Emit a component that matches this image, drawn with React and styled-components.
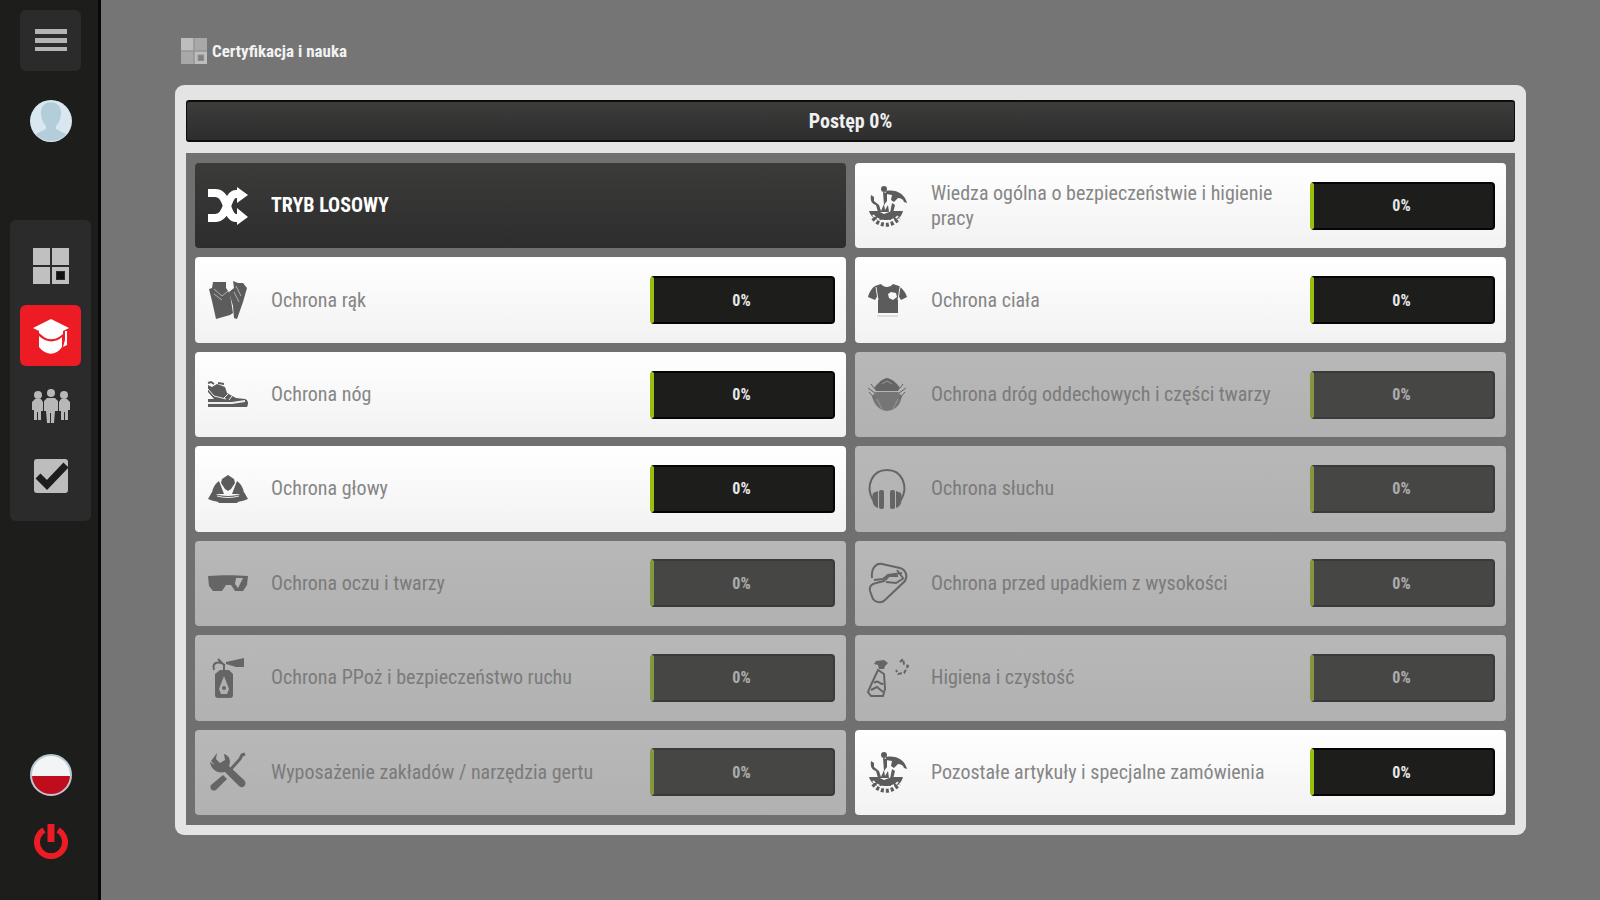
import styled, { createGlobalStyle } from 'styled-components';

const GlobalStyle = createGlobalStyle`
    * {
        box-sizing: border-box;
    }
    body {
        margin: 0;
        background: #757575;
        font-family: 'Roboto Condensed', 'Liberation Sans Narrow', Roboto, sans-serif;
    }
    button {
        font-family: inherit;
        border: 0;
        padding: 0;
        cursor: pointer;
    }
`

const Page = styled.div`
    display: flex;
    min-height: 100vh;
`
const Sidebar = styled.nav`
    display: flex;
    flex-direction: column;
    align-items: center;
    width: 101px;
    padding: 10px 0 41px;
    background: #1d1d1b;
    box-shadow: inset -3px 0 #080808;
`
const SideButton = styled.button`
    display: flex;
    align-items: center;
    justify-content: center;
    width: 61px;
    height: 61px;
    border-radius: 6px;
    background: ${props => props.$bg || 'transparent'};
`
const RoundButton = styled.button`
    display: block;
    width: 44px;
    height: 44px;
    border-radius: 50%;
    background: transparent;
    margin-top: ${props => props.$top || 0};
`
const Menu = styled.div`
    display: flex;
    flex-direction: column;
    gap: 9px;
    margin-top: 77px;
    padding: 15px 10px;
    border-radius: 6px;
    background: #2b2b2b;
`
const SideBottom = styled.div`
    display: flex;
    flex-direction: column;
    align-items: center;
    gap: 26px;
    margin-top: auto;
`
const PowerButton = styled.button`
    display: flex;
    background: transparent;
`
const Main = styled.main`
    display: flex;
    flex-direction: column;
    flex: 1;
    padding: 0 74px 65px;
`
const Header = styled.header`
    display: flex;
    align-items: center;
    gap: 5px;
    height: 85px;
    padding: 17px 6px 0;
`
const Title = styled.h1`
    margin: 0;
    color: #f2f2f2;
    font-size: 17px;
    font-weight: 700;
    line-height: 25px;
`
const Panel = styled.section`
    display: flex;
    flex-direction: column;
    flex: 1;
    gap: 11px;
    padding: 15px 11px 10px;
    border-radius: 9px;
    background: #e4e4e4;
`
const TotalBar = styled.div`
    display: flex;
    align-items: center;
    justify-content: center;
    height: 42px;
    border: 1px solid #0c0c0c;
    border-width: 2px 1px;
    border-radius: 3px;
    background: linear-gradient(#3c3c3b, #2d2d2d);
    color: #f0f0f0;
    font-size: 20px;
    font-weight: 700;
`
const Grid = styled.div`
    display: grid;
    grid-template-columns: 1fr 1fr;
    grid-auto-rows: 1fr;
    flex: 1;
    gap: 9px;
    padding: 10px 9px;
    background: #707070;
`
const Card = styled.button`
    display: flex;
    align-items: center;
    gap: 23px;
    min-height: 68px;
    padding: 0 11px 0 13px;
    border-radius: 4px;
    background: ${props => props.$dark ? 'linear-gradient(#3b3b3a, #2d2d2d)' : 'linear-gradient(#ffffff, #f2f2f2)'};
    color: ${props => props.$dark ? '#ffffff' : '#868686'};
    text-align: left;
    &:disabled {
        opacity: 0.5;
        cursor: default;
    }
`
const CardIcon = styled.svg`
    flex: none;
    width: 40px;
    height: 40px;
    color: ${props => props.$light ? '#ffffff' : '#5c5c5c'};
    fill: currentColor;
    overflow: visible;
`
const Label = styled.span`
    flex: 1;
    font-size: 20px;
    font-weight: ${props => props.$strong ? 700 : 400};
    line-height: 25px;
`
const Badge = styled.span`
    display: flex;
    align-items: center;
    justify-content: center;
    flex: none;
    width: 185px;
    height: 48px;
    padding-right: 4px;
    border: 2px solid #050505;
    border-left: 4px solid #97bf0d;
    border-radius: 4px;
    background: #1d1d1b;
    color: #e8e8e8;
    font-size: 16px;
    font-weight: 700;
`

const Shuffle = () => (
    <>
        <path d="M0 7h7c6 0 9 4 12 13s5 12 9 12h4M0 32h7c6 0 9-4 12-12s5-12 9-12h4" fill="none" stroke="currentColor" strokeWidth="8" />
        <path d="M29 1l11 8-11 8zM29 22l11 9-11 8z" />
    </>
)

const Harbour = () => (
    <>
        <circle cx="16" cy="3" r="3" />
        <path d="M15 6l4 1 0 8-3 4z" />
        <path d="M3 9l3 2 0 4 5 4 2 6 3-7 1 6 3-5 1 7h-11l-2-7C4 18 2 15 3 9z" />
        <path d="M18 5c10-2 19 3 21 12l-3-1c-1-3-3-4-6-4l-4 4-3-2 1-5-6-1z" />
        <path d="M24 17l3 2-2 8h-3z" />
        <path d="M1 25h9l6 3 8-3h11c-1 4-3 7-7 9H9c-4-2-7-5-8-9z" />
        <path d="M5 29c6 8 20 8 26 0" fill="none" stroke="#f6f6f6" strokeWidth="2" strokeDasharray="3 2" />
        <path d="M5 32c7 9 19 9 26 0" fill="none" stroke="currentColor" strokeWidth="4" strokeDasharray="3 2" />
    </>
)

const Gloves = () => (
    <>
        <path d="M5 2l13 0 0 6 4 6 3 19-3 2-14 4L4 21 1 9l3-1z" />
        <path d="M25 1l5 2 5 0 4 5-4 14-6 17-3-1-1-12-4-14 5-4z" />
        <path d="M6 9l8 7 6-5M6 14l8 6M28 6l5 10M26 12l5 10" fill="none" stroke="#b0b0b0" strokeWidth="1" />
    </>
)

const Shirt = () => (
    <>
        <path d="M13 4c3 4 9 4 12 0l6 2c4 3 7 7 8 11l-6 3-3-5v18H10V15l-3 5-7-3c1-5 4-9 7-11z" />
        <path d="M8 7l2 13M32 7l-2 13" stroke="#f0f0f0" strokeWidth="1" />
        <path d="M20 14l3-2 5 1 1 4-4 3-4-2z" fill="#f8f8f8" />
        <path d="M9 36h21" stroke="#dddddd" strokeWidth="2" />
    </>
)

const Shoe = () => (
    <>
        <path d="M0 10l4 2 5-3 8 3 2 6 9 5 9 1c3 1 4 4 2 8H0v-8h6L0 17z" />
        <path d="M0 28h24l13-2" fill="none" stroke="#eeeeee" strokeWidth="2" />
        <path d="M0 14l6 7 12 3M20 19l-4 4M24 21l-3 4" fill="none" stroke="#eeeeee" strokeWidth="1" />
        <path d="M0 8l3-1 3 2M10 8l6 1" fill="none" stroke="currentColor" strokeWidth="2" />
    </>
)

const Helmet = () => (
    <>
        <path d="M14 10l6-4 6 4 1 4-4 6-3 2-3-2-4-6z" />
        <path d="M11 12l5 13H4c0-5 3-10 7-13zM29 12l-5 13h12c0-5-3-10-7-13z" />
        <path d="M4 23l-4 7c12 5 28 5 40 0l-4-7-1 1c-8 4-22 4-30 0z" />
        <path d="M7 30c8 4 18 4 26 0l-4 4H11z" />
        <path d="M9 27c7 2 15 2 22 0" fill="none" stroke="#eeeeee" strokeWidth="1" />
    </>
)

const Mask = () => (
    <>
        <path d="M19 3c5 1 10 5 13 10l-2 3H8l-2-3C10 8 14 4 19 3z" />
        <path d="M8 17h22l4 4c-2 10-7 14-15 15C11 35 6 30 4 21z" opacity="0.8" />
        <path d="M14 9l5-3 5 3M9 24l5 10M30 24l-5 10" fill="none" stroke="#bcbcbc" strokeWidth="1" />
        <path d="M0 13l7 5M1 17l6 7M38 13l-7 5M37 17l-6 7M3 9l3 4M35 9l-3 4" stroke="currentColor" strokeWidth="1" />
    </>
)

const EarMuffs = () => (
    <>
        <path d="M5 31C-3 17 4 1 19 1s22 16 14 30" fill="none" stroke="currentColor" strokeWidth="2" />
        <path d="M5 24l5-2v17c-5-1-7-8-5-15zM33 24l-5-2v17c5-1 7-8 5-15z" />
        <rect x="11" y="21" width="5" height="19" rx="2" />
        <rect x="22" y="21" width="5" height="19" rx="2" />
    </>
)

const Goggles = () => (
    <path d="M0 13c12-1 28-1 40 0l-1 9-4 6h-8l-4-6h-5l-4 6H5l-4-5zM28 15l-1 6 3 4 5-10z" fillRule="evenodd" />
)

const Carabiner = () => (
    <>
        <path d="M4 15C3 5 8 0 14 1l18 4c6 2 8 8 5 13L17 37c-4 4-10 2-12-1L2 28c-1-4 1-7 6-8l8-2 5-5h9" fill="none" stroke="currentColor" strokeWidth="2" />
        <path d="M6 17l9-1 5-4 14-2M18 19l10 1 8-5M29 7l6 8" fill="none" stroke="currentColor" strokeWidth="2" />
    </>
)

const Extinguisher = () => (
    <>
        <path d="M7 16l5-4h9l4 4v21c0 2-1 3-3 3H10c-2 0-3-1-3-3z" />
        <path d="M16 18l5 13-2 5h-6l-2-5z" fill="#eeeeee" />
        <circle cx="16" cy="30" r="2" />
        <path d="M16 12V7L10 1M6 12C4 5 9 2 17 7" fill="none" stroke="currentColor" strokeWidth="2" />
        <path d="M18 4l18-4v9l-8 0-10-3z" />
    </>
)

const Spray = () => (
    <>
        <path d="M8 3l8-1 4 3-3 3-1 3h-5l-1-4-4-1z" />
        <path d="M10 12l-7 15-3 7 3 4h12l2-7-1-15z" fill="none" stroke="currentColor" strokeWidth="2" />
        <path d="M6 25c5-5 7 4 9 0M3 32l6-3 6 5" fill="none" stroke="currentColor" strokeWidth="2" />
        <path d="M32 4l3-3 1 5 4 2-4 7-6 1-2-4" fill="none" stroke="currentColor" strokeWidth="2" strokeDasharray="4 2" />
    </>
)

const Tools = () => (
    <>
        <path d="M9 1l-1 6 4 4 5-3-1-6c6 2 7 7 5 12l15 14c4 4-1 10-5 6L17 20C9 22 3 17 2 10l5 3-4-4z" />
        <path d="M37 2l-3 1-2 4-9 10" fill="none" stroke="currentColor" strokeWidth="3" />
        <path d="M15 23l4 4L8 38c-4 2-7-2-5-5z" />
    </>
)

const TilesIcon = ({ size, dim }) => (
    <svg width={size} height={size} viewBox="0 0 36 36" fill={dim ? '#bdbdbd' : '#c0c0c0'} aria-hidden="true">
        {dim && <rect width="36" height="36" fill="#959595" />}
        <rect width="17" height="17" />
        <rect x="19" width="17" height="17" fill={dim ? '#a8a8a8' : '#c0c0c0'} />
        <rect y="19" width="17" height="17" fill={dim ? '#a8a8a8' : '#c0c0c0'} />
        <path d="M19 19h17v17H19zM23 23v9h9v-9z" fillRule="evenodd" />
        <rect x="24" y="24" width="7" height="7" fill={dim ? '#808080' : '#111111'} />
    </svg>
)

const cards = [
    { label: 'Wiedza ogólna o bezpieczeństwie i higienie pracy', icon: Harbour, progress: 0 },
    { label: 'Ochrona rąk', icon: Gloves, progress: 0 },
    { label: 'Ochrona ciała', icon: Shirt, progress: 0 },
    { label: 'Ochrona nóg', icon: Shoe, progress: 0 },
    { label: 'Ochrona dróg oddechowych i części twarzy', icon: Mask, progress: 0, locked: true },
    { label: 'Ochrona głowy', icon: Helmet, progress: 0 },
    { label: 'Ochrona słuchu', icon: EarMuffs, progress: 0, locked: true },
    { label: 'Ochrona oczu i twarzy', icon: Goggles, progress: 0, locked: true },
    { label: 'Ochrona przed upadkiem z wysokości', icon: Carabiner, progress: 0, locked: true },
    { label: 'Ochrona PPoż i bezpieczeństwo ruchu', icon: Extinguisher, progress: 0, locked: true },
    { label: 'Higiena i czystość', icon: Spray, progress: 0, locked: true },
    { label: 'Wyposażenie zakładów / narzędzia gertu', icon: Tools, progress: 0, locked: true },
    { label: 'Pozostałe artykuły i specjalne zamówienia', icon: Harbour, progress: 0 },
]

function SideNav() {
    return (
        <Sidebar>
            <SideButton $bg="#2b2b2b" aria-label="Menu">
                <svg width="32" height="24" viewBox="0 0 32 24" fill="#b4b4b4">
                    <rect y="0" width="32" height="5" />
                    <rect y="9" width="32" height="5" />
                    <rect y="18" width="32" height="4" />
                </svg>
            </SideButton>
            <RoundButton $top="28px" aria-label="Profil">
                <svg width="44" height="44" viewBox="0 0 44 44">
                    <clipPath id="face"><circle cx="22" cy="22" r="20" /></clipPath>
                    <circle cx="22" cy="22" r="21" fill="#d9e8f0" />
                    <g clipPath="url(#face)" fill="#b4cddb">
                        <path d="M12 13C12 0 32 0 32 13c0 7-2 11-5 14v3l10 5v8H7v-8l10-5v-3c-3-3-5-7-5-14z" />
                    </g>
                </svg>
            </RoundButton>
            <Menu>
                <SideButton aria-label="Pulpit"><TilesIcon size={36} /></SideButton>
                <SideButton $bg="#ed1c24" aria-label="Certyfikacja i nauka">
                    <svg width="36" height="36" viewBox="0 0 36 36" fill="#ffffff">
                        <path d="M18 1l18 9-6 3v3l-4 3c-5 3-11 3-15 0l-5-4v-2l-6-3z" />
                        <path d="M6 18c7 7 17 7 23 1v10c-6 9-16 9-23 0z" />
                        <path d="M32 13h2v14l-4 2 2-7z" />
                    </svg>
                </SideButton>
                <SideButton aria-label="Zespół">
                    <svg width="38" height="34" viewBox="0 0 38 34" fill="#b8b8b8">
                        <circle cx="19" cy="4" r="4" />
                        <path d="M15 9h8l3 3v10h-3l-1 12h-3V24h-1v10h-3l-1-12h-2V12z" />
                        <circle cx="6" cy="6" r="4" />
                        <path d="M3 10h6l2 3v9H9v9H6v-8H5v8H2V21H0v-8z" />
                        <circle cx="32" cy="6" r="4" />
                        <path d="M29 10h6l3 3v8h-2v10h-3v-8h-1v8h-3v-9h-2v-9z" />
                    </svg>
                </SideButton>
                <SideButton aria-label="Testy">
                    <svg width="36" height="36" viewBox="0 0 36 36">
                        <rect x="1" y="1" width="34" height="34" rx="3" fill="#bdbdbd" />
                        <path d="M5 18l9 9L33 7" fill="none" stroke="#1d1d1b" strokeWidth="7" />
                    </svg>
                </SideButton>
            </Menu>
            <SideBottom>
                <RoundButton aria-label="Język polski">
                    <svg width="44" height="44" viewBox="0 0 44 44">
                        <circle cx="22" cy="22" r="20" fill="#f2f4f5" />
                        <path d="M2 23h40a20 20 0 0 1-40 0z" fill="#c00d1e" />
                        <circle cx="22" cy="22" r="20" fill="none" stroke="#b9c8d0" strokeWidth="2" />
                    </svg>
                </RoundButton>
                <PowerButton aria-label="Wyloguj">
                    <svg width="36" height="36" viewBox="0 0 36 36" fill="none" stroke="#ed1c24" strokeWidth="6">
                        <path d="M11 7a14 14 0 1 0 14 0" />
                        <path d="M18 1v18" strokeWidth="7" />
                    </svg>
                </PowerButton>
            </SideBottom>
        </Sidebar>
    )
}

export default function App() {
    return (
        <Page>
            <GlobalStyle />
            <SideNav />
            <Main>
                <Header>
                    <TilesIcon size={26} dim />
                    <Title>Certyfikacja i nauka</Title>
                </Header>
                <Panel>
                    <TotalBar>Postęp 0%</TotalBar>
                    <Grid>
                        <Card $dark>
                            <CardIcon $light viewBox="0 0 40 40" aria-hidden="true"><Shuffle /></CardIcon>
                            <Label $strong>TRYB LOSOWY</Label>
                        </Card>
                        {cards.map(({ label, icon: Icon, progress, locked }) => (
                            <Card key={label} disabled={locked}>
                                <CardIcon viewBox="0 0 40 40" aria-hidden="true"><Icon /></CardIcon>
                                <Label>{label}</Label>
                                <Badge>{progress}%</Badge>
                            </Card>
                        ))}
                    </Grid>
                </Panel>
            </Main>
        </Page>
    )
}
